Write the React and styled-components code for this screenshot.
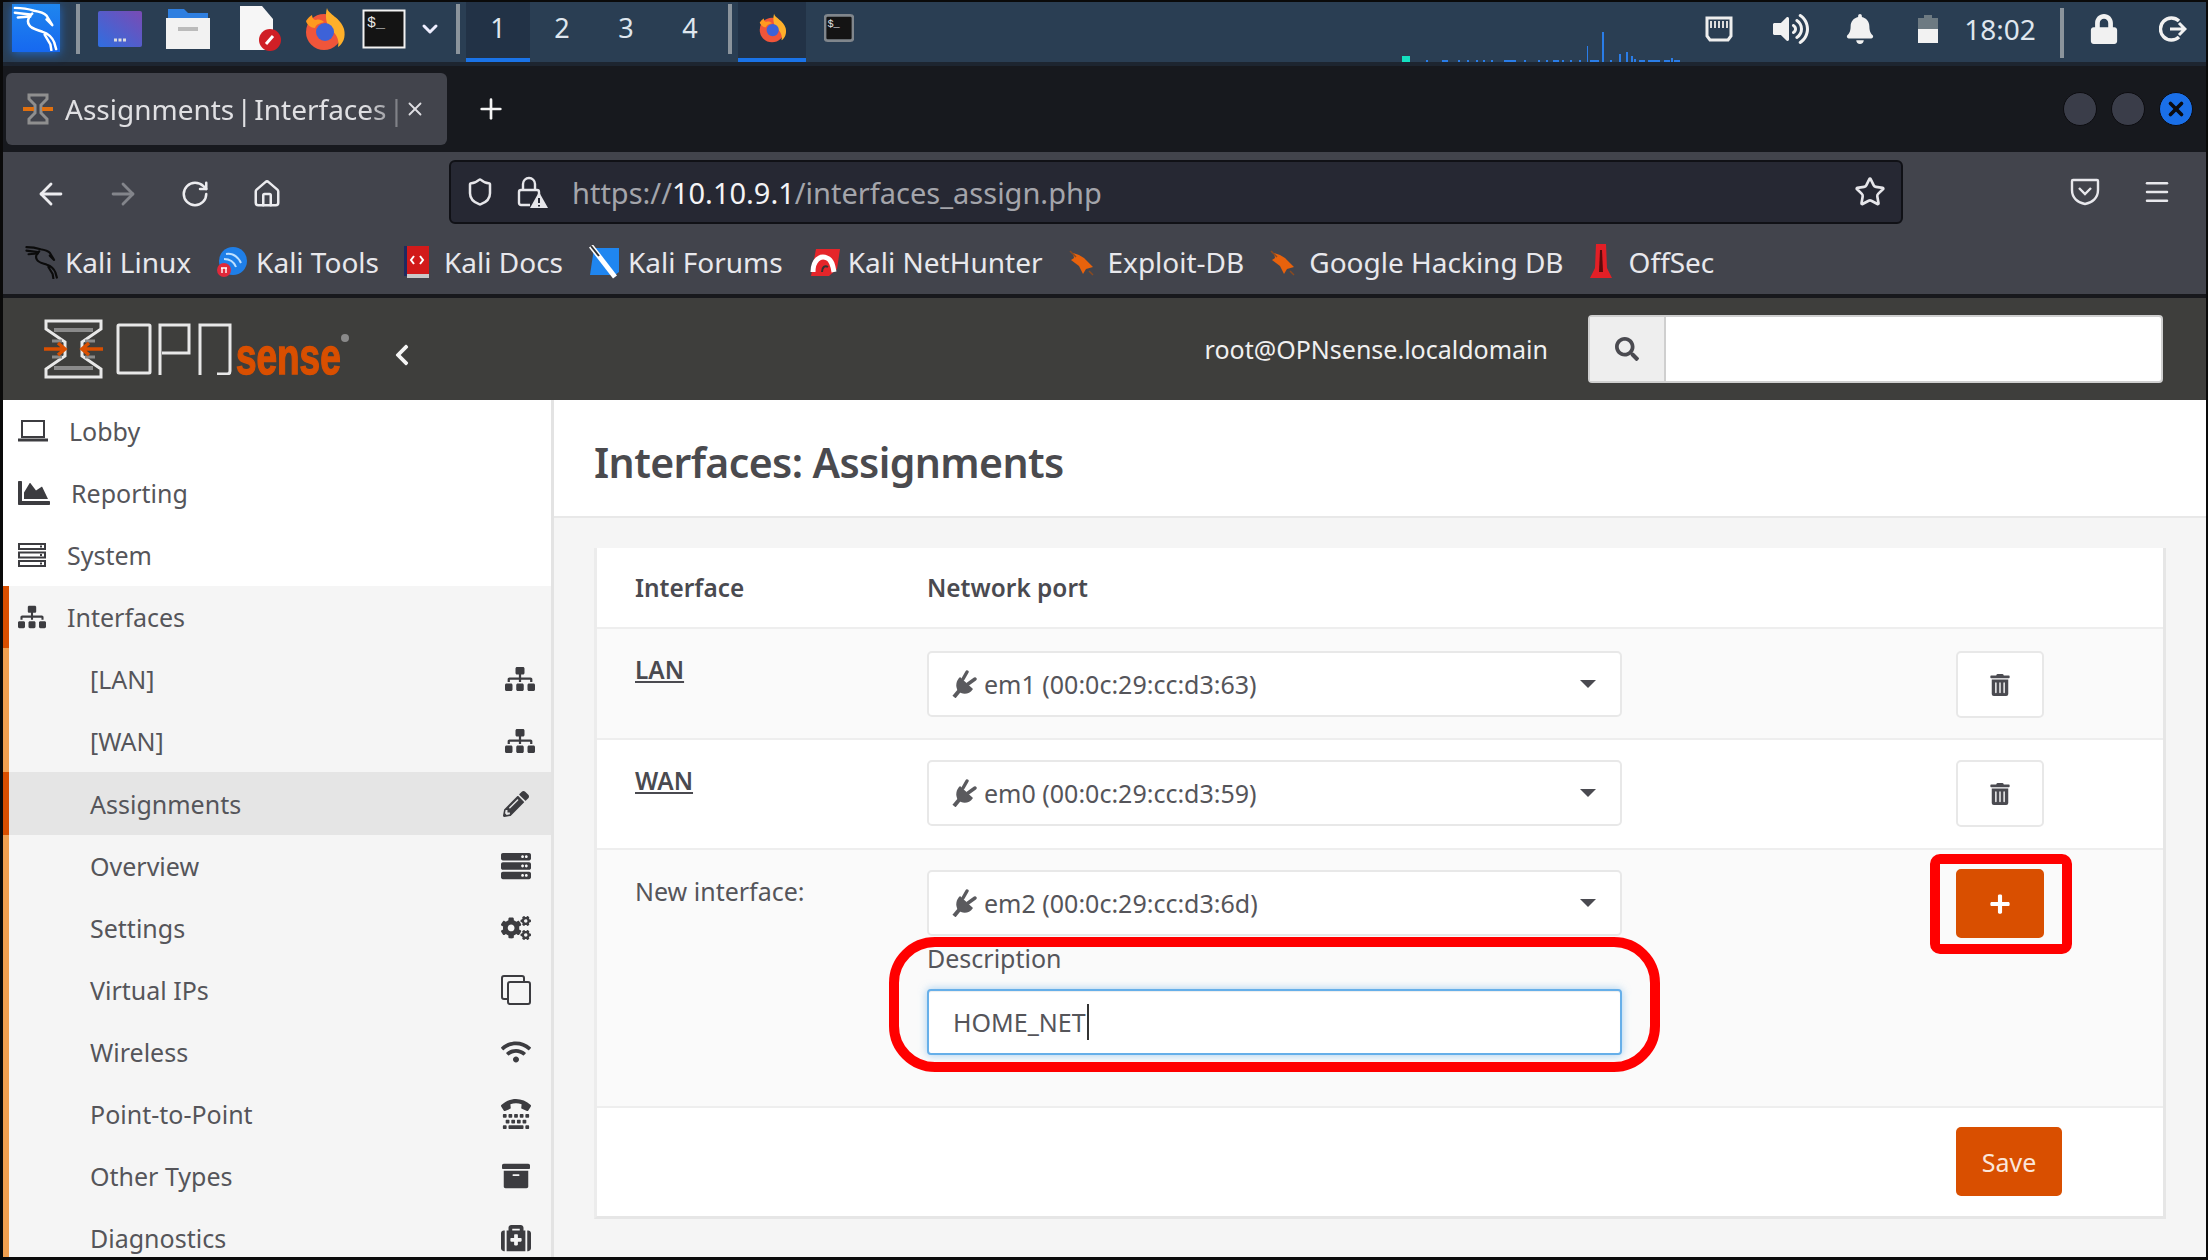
import React from 'react';
import styled, { createGlobalStyle } from 'styled-components';
import {
  FaChartArea, FaServer, FaSitemap, FaPencilAlt, FaCogs,
  FaWifi, FaTty, FaArchive, FaMedkit, FaTrashAlt, FaPlus, FaSearch, FaChevronLeft,
  FaLock, FaBell, FaVolumeUp,
} from 'react-icons/fa';
import { ArrowLeft, ArrowRight, RotateCw, Home, Shield, Star, Menu, ChevronDown, Plus, X } from 'lucide-react';

const UI = '"Noto Sans", "Open Sans", sans-serif';

const Global = createGlobalStyle`
  html, body { margin: 0; padding: 0; background: #000; }
  * { box-sizing: border-box; }
  body { font-family: ${UI}; }
`;

const Screen = styled.div`
  width: 2208px;
  height: 1260px;
  padding: 2px 2px 3px 3px;
  background: #0a0a0a;
  display: flex;
  flex-direction: column;
  overflow: hidden;
  position: relative;
`;

/* taskbar */
const Taskbar = styled.div`
  height: 64px;
  flex: none;
  display: flex;
  align-items: stretch;
  background: #2a3e53;
  border-bottom: 4px solid #1d2530;
`;
const KaliButton = styled.div`
  width: 48px;
  height: 48px;
  margin: 2px 0 0 9px;
  background: linear-gradient(#1f86ee, #1668f0);
  display: flex;
  align-items: center;
  justify-content: center;
  box-shadow: 0 2px 9px rgba(30, 120, 240, .7);
`;
const BarRule = styled.div`
  width: 4px;
  height: 50px;
  margin: 2px ${p => p.$right || 0}px 0 ${p => p.$left || 0}px;
  background: #8b949c;
`;
const LauncherSlot = styled.div`
  width: ${p => p.$w}px;
  flex: none;
  padding-bottom: 6px;
  display: flex;
  align-items: center;
  justify-content: center;
`;
const Workspace = styled.div`
  width: 64px;
  padding-bottom: 6px;
  display: flex;
  align-items: center;
  justify-content: center;
  color: #dfe6ee;
  font-size: 27px;
  background: ${p => (p.$active ? '#223246' : 'transparent')};
  border-bottom: 4px solid ${p => (p.$active ? '#1a73e8' : 'transparent')};
`;
const TaskItem = styled.div`
  width: ${p => p.$w}px;
  padding-bottom: 4px;
  display: flex;
  align-items: center;
  justify-content: center;
  background: ${p => (p.$active ? '#223246' : 'transparent')};
  border-bottom: 4px solid ${p => (p.$active ? '#1a73e8' : 'transparent')};
`;
const Spacer = styled.div`
  flex: 1;
`;
const Tray = styled.div`
  display: flex;
  align-items: center;
  color: #f1f1f1;
`;
const TrayCell = styled.div`
  width: ${p => p.$w}px;
  padding-bottom: 6px;
  display: flex;
  justify-content: center;
`;
const Clock = styled.div`
  font-size: 28px;
  color: #dfe6ee;
  width: 80px;
  padding-bottom: 6px;
  text-align: center;
`;
const NetGraph = styled.svg`
  align-self: flex-end;
  display: block;
`;

/* firefox chrome */
const TabStrip = styled.div`
  height: 86px;
  flex: none;
  background: #17191e;
  display: flex;
  align-items: center;
  padding: 0 0 0 3px;
`;
const BrowserTab = styled.div`
  width: 441px;
  height: 72px;
  background: #42444c;
  border-radius: 6px;
  display: flex;
  align-items: center;
  padding-left: 17px;
  font-size: 28px;
  white-space: nowrap;
`;
const TabTitle = styled.span`
  margin-left: 12px;
  width: 334px;
  color: #e0e0e3;
  word-spacing: -5px;
  -webkit-mask-image: linear-gradient(90deg, #000 90%, rgba(0,0,0,.35));
  mask-image: linear-gradient(90deg, #000 90%, rgba(0,0,0,.35));
`;
const CloseTab = styled(X)`
  margin-left: 5px;
  color: #dedee2;
`;
const NewTab = styled.div`
  margin-left: 28px;
  color: #f5f5f5;
  display: flex;
`;
const WinButtons = styled.div`
  margin-left: auto;
  margin-right: 13px;
  display: flex;
  gap: 14px;
`;
const WinButton = styled.div`
  width: 34px;
  height: 34px;
  border-radius: 50%;
  background: ${p => (p.$close ? '#1a6fe8' : '#3a3d49')};
  border: 1px solid #0c0c10;
  display: flex;
  align-items: center;
  justify-content: center;
  color: #0b0b10;
`;
const NavBar = styled.div`
  height: 78px;
  flex: none;
  background: #42444c;
  display: flex;
  align-items: center;
  color: #f0f0f2;
  padding: 5px 0 0 12px;
`;
const NavIcon = styled.div`
  width: 72px;
  display: flex;
  justify-content: center;
  color: ${p => (p.$dim ? '#83858b' : '#ececef')};
`;
const UrlBox = styled.div`
  width: 1454px;
  height: 64px;
  margin: -3px 0 0 146px;
  background: #262833;
  border: 2px solid #101116;
  border-radius: 6px;
  display: flex;
  align-items: center;
  padding: 0 15px 0 14px;
  gap: 21px;
  color: #e6e6ea;
`;
const UrlText = styled.div`
  flex: 1;
  margin-left: 3px;
  font-size: 29px;
  color: #a4a5ab;
  white-space: nowrap;
`;
const UrlHost = styled.span`
  color: #f4f4f6;
`;
const RightTools = styled.div`
  margin: -3px 0 0 167px;
  display: flex;
  align-items: center;
  gap: 42px;
  color: #e8e8ec;
`;
const BookmarkBar = styled.div`
  height: 68px;
  flex: none;
  background: #42444c;
  border-bottom: 4px solid #17181c;
  display: flex;
  align-items: center;
  padding: 0 0 0 22px;
  gap: 25px;
`;
const Bookmark = styled.div`
  display: flex;
  align-items: center;
  color: #e8e8ec;
  font-size: 28px;
  white-space: nowrap;
`;
const BookmarkIcon = styled.span`
  width: 40px;
  flex: none;
  display: flex;
  align-items: center;
`;

/* opnsense */
const Navbar = styled.div`
  height: 102px;
  flex: none;
  background: #3e3e3c;
  display: flex;
  align-items: center;
  color: #fff;
`;
const Brand = styled.div`
  display: flex;
  align-items: center;
  margin-left: 41px;
`;
const WordGap = styled.span`
  width: 13px;
`;
const SenseWord = styled.span`
  font-family: "Liberation Sans", sans-serif;
  font-weight: 700;
  font-size: 52px;
  line-height: 1;
  color: #d94f00;
  -webkit-text-stroke: 1.5px #d94f00;
  transform: scaleX(.71);
  transform-origin: left bottom;
  display: inline-block;
  width: 105px;
  margin: 14px 0 0 4px;
`;
const Registered = styled.svg`
  margin: -22px 0 0 0;
`;
const BackChevron = styled.div`
  display: flex;
  color: #f5f5f5;
  margin: 12px 0 0 41px;
`;
const UserName = styled.div`
  margin-left: auto;
  font-size: 25px;
  color: #f0f0f0;
`;
const SearchGroup = styled.div`
  width: 575px;
  height: 68px;
  margin: 0 43px 0 40px;
  display: flex;
  background: #fff;
  border: 2px solid #cfcfcf;
  border-radius: 4px;
`;
const SearchAddon = styled.div`
  width: 76px;
  background: #eeeeee;
  border-right: 2px solid #cfcfcf;
  color: #4a4a50;
  display: flex;
  align-items: center;
  justify-content: center;
`;
const Body = styled.div`
  flex: 1;
  display: flex;
  min-height: 0;
`;
const Sidebar = styled.div`
  width: 551px;
  flex: none;
  background: #fff;
  border-right: 3px solid #e3e3e3;
  overflow: hidden;
`;
const MenuRow = styled.div`
  height: ${p => p.$h || 62}px;
  display: flex;
  align-items: center;
  font-size: 25px;
  color: #55555a;
  background: ${p => p.$bg || 'transparent'};
  border-left: 6px solid ${p => p.$accent || 'transparent'};
  padding-left: ${p => (p.$sub ? 81 : 9)}px;
  padding-right: ${p => (p.$sub ? 20 : 0)}px;
`;
const MenuIcon = styled.span`
  width: ${p => p.$w}px;
  flex: none;
  display: flex;
  color: #3c3c40;
`;
const SubIcon = styled.span`
  margin-left: auto;
  width: 30px;
  display: flex;
  justify-content: center;
  color: #3c3c40;
`;
const SubSitemap = styled(FaSitemap)`
  margin-left: 8px;
  flex: none;
`;
const Main = styled.div`
  flex: 1;
  min-width: 0;
  background: #f5f5f5;
  display: flex;
  flex-direction: column;
`;
const TitleBand = styled.div`
  height: 118px;
  flex: none;
  background: #fff;
  border-bottom: 2px solid #e8e8e8;
  display: flex;
  align-items: center;
  padding: 8px 0 0 40px;
`;
const PageTitle = styled.h1`
  margin: 0;
  font-size: 41px;
  font-weight: 600;
  color: #4a4a4e;
  letter-spacing: -.6px;
`;
const Card = styled.div`
  margin: 30px 40px 0 40px;
  background: #fff;
  border-left: 3px solid #ececec;
  border-right: 3px solid #e6e6e6;
  border-bottom: 3px solid #e6e6e6;
`;
const TableRow = styled.div`
  display: grid;
  grid-template-columns: 330px 695px 334px 1fr;
  height: ${p => p.$h}px;
  background: ${p => (p.$odd ? '#fafafa' : '#fff')};
  border-bottom: ${p => (p.$last ? 0 : 2)}px solid #eeeeee;
`;
const Cell = styled.div`
  padding-left: ${p => (p.$first ? 38 : 0)}px;
  padding-top: ${p => p.$top || 0}px;
  font-size: 25px;
  color: #55555a;
`;
const HeadCell = styled(Cell)`
  font-weight: 600;
  font-size: 24.4px;
  display: flex;
  align-items: center;
  color: #4a4a50;
`;
const IfLink = styled.a`
  font-weight: 600;
  font-size: 24.4px;
  text-decoration: underline;
  color: #4a4a50;
`;
const Select = styled.div`
  width: 695px;
  height: 66px;
  background: #fff;
  border: 2px solid #e8e8e8;
  border-radius: 5px;
  display: flex;
  align-items: center;
  padding: 0 24px 0 23px;
  font-size: 25px;
  color: #55555a;
  gap: 7px;
`;
const Caret = styled.span`
  margin-left: auto;
  width: 0;
  height: 0;
  border-left: 8px solid transparent;
  border-right: 8px solid transparent;
  border-top: 8px solid #4a4a50;
`;
const FieldLabel = styled.div`
  height: 53px;
  padding-bottom: 10px;
  display: flex;
  align-items: center;
`;
const TextBox = styled.div`
  width: 695px;
  height: 66px;
  background: #fff;
  border: 2px solid #66afe9;
  border-radius: 4px;
  box-shadow: inset 0 1px 1px rgba(0,0,0,.075), 0 0 8px rgba(102,175,233,.6);
  display: flex;
  align-items: center;
  padding-left: 24px;
  color: #55555a;
  font-size: 25px;
`;
const TextCaret = styled.span`
  width: 2px;
  height: 36px;
  background: #333;
  margin-left: 1px;
`;
const IconButton = styled.div`
  width: 88px;
  height: ${p => (p.$primary ? 69 : 67)}px;
  background: ${p => (p.$primary ? '#d94f00' : '#fff')};
  border: 2px solid ${p => (p.$primary ? '#d94f00' : '#e8e8e8')};
  border-radius: 5px;
  color: ${p => (p.$primary ? '#fff' : '#4a4a50')};
  display: flex;
  align-items: center;
  justify-content: center;
`;
const SaveButton = styled.div`
  width: 106px;
  height: 69px;
  background: #d94f00;
  border-radius: 5px;
  color: #fbe6da;
  font-size: 25px;
  display: flex;
  align-items: center;
  justify-content: center;
`;
const Annotation = styled.div`
  position: absolute;
  border: ${p => p.$bw}px solid #ff0000;
  border-radius: ${p => p.$r}px;
  left: ${p => p.$x}px;
  top: ${p => p.$y}px;
  width: ${p => p.$w}px;
  height: ${p => p.$h}px;
  pointer-events: none;
`;

const KaliDragon = ({ size = 48, color = '#fff', sw = 2.6 }) => (
  <svg width={size} height={size} viewBox="0 0 48 48" fill="none" stroke={color} strokeWidth={sw} strokeLinecap="round" strokeLinejoin="round">
    <path d="M2 3c8 0 14 1 20 3 6 1 11 3 13 5l6 10-6-6" />
    <path d="M20 9c-4 4-6 8-3 12 2 4 9 5 14 7 6 2 10 6 12 11l2 7M33 31l6 10 1 6" />
    <path d="M2 8l16 2M5 13l13-1" />
  </svg>
);

const TabLogo = () => (
  <svg width="30" height="32" viewBox="0 0 30 32" fill="none">
    <path d="M6 2h18v4l-6 6v8l6 6v4H6v-4l6-6v-8L6 6z" stroke="#8f8f8f" strokeWidth="3" />
    <path d="M0 16h11M30 16H19" stroke="#e0700f" strokeWidth="4" />
  </svg>
);

const OpnLogoMark = () => (
  <svg width="59" height="60" viewBox="0 0 59 60" fill="none">
    <path d="M2 2h55v8L38 23v14l19 13v8H2v-8l19-13V23L2 10z" stroke="#e8e8e8" strokeWidth="3" />
    <path d="M10 9h39v4H10zM10 47h39v4H10z" fill="#8a8a8a" />
    <path d="M8 22h10M51 22H41M8 38h10M51 38H41" stroke="#8a8a8a" strokeWidth="3" />
    <path d="M0 30h21M59 30H38M14 24l7 6-7 6M45 24l-7 6 7 6" stroke="#d94f00" strokeWidth="3.5" />
  </svg>
);

const OpnWord = () => (
  <svg width="116" height="52" viewBox="0 0 116 52" fill="none" stroke="#e8e8e8" strokeWidth="3">
    <rect x="2" y="2" width="32" height="48" rx="1" />
    <path d="M44 52V2h29v28H46" />
    <path d="M84 52V2h30v46c0 2-1 3-3 3H101" />
  </svg>
);

const Firefox = ({ size = 44 }) => (
  <svg width={size} height={size} viewBox="0 0 44 44">
    <circle cx="22" cy="25" r="18" fill="#f0553a" />
    <path d="M25 1c1 6 14 10 17 21 2 8-1 15-6 18 2-8-3-15-9-19-3-6-4-13-2-20z" fill="#ffb02a" />
    <path d="M4 14c2-3 4-5 6-6 0 3 2 5 4 5 3-1 6 0 8 2-3 1-8 2-9 6-4 0-8-3-9-7z" fill="#ff9a1f" />
    <circle cx="23" cy="25" r="9" fill="#3d62d8" />
  </svg>
);

const Terminal = ({ w, h, border = '#f2f2f2', sw = 2, r = 0 }) => (
  <svg width={w} height={h} viewBox="0 0 44 40">
    <rect x="1.5" y="1.5" width="41" height="37" rx={r} fill="#141414" stroke={border} strokeWidth={sw} />
    <text x="5" y="18" fontFamily="Liberation Mono, monospace" fontSize="15" fill="#e8e8e8">$_</text>
  </svg>
);

const WarnLock = () => (
  <svg width="32" height="34" viewBox="0 0 32 34" fill="none">
    <path d="M7 16V9a6 6 0 0 1 12 0v7" stroke="#e6e6ea" strokeWidth="2.4" />
    <path d="M14 30H5a2 2 0 0 1-2-2V17a2 2 0 0 1 2-2h16a2 2 0 0 1 2 2v3" stroke="#e6e6ea" strokeWidth="2.4" />
    <path d="M23 17l9 16H14z" fill="#e6e6ea" />
    <path d="M23 23v5M23 30v1.5" stroke="#262833" strokeWidth="2" />
  </svg>
);

const PocketIcon = () => (
  <svg width="30" height="30" viewBox="0 0 30 30" fill="none" stroke="#e8e8ec" strokeWidth="2.4">
    <path d="M3 3h24a1 1 0 0 1 1 1v9c0 8-6 13-13 14C8 26 2 21 2 13V4a1 1 0 0 1 1-1z" />
    <path d="M9 11l6 6 6-6" />
  </svg>
);

const LobbyIcon = () => (
  <svg width="30" height="24" viewBox="0 0 30 24" fill="none" stroke="#3c3c40" strokeWidth="2">
    <rect x="4" y="2" width="22" height="16" />
    <path d="M0 21h30" strokeWidth="3" />
  </svg>
);

const SystemIcon = () => (
  <svg width="28" height="24" viewBox="0 0 28 24" fill="none" stroke="#3c3c40" strokeWidth="2">
    <rect x="1" y="1" width="26" height="5" />
    <rect x="1" y="9.5" width="26" height="5" />
    <rect x="1" y="18" width="26" height="5" />
    <path d="M22 3.5h2M22 12h2M22 20.5h2" />
  </svg>
);

const CloneIcon = () => (
  <svg width="30" height="30" viewBox="0 0 30 30" fill="none" stroke="#3c3c40" strokeWidth="2">
    <path d="M6 24H3a2 2 0 0 1-2-2V3a2 2 0 0 1 2-2h18a2 2 0 0 1 2 2v3" />
    <rect x="7" y="7" width="22" height="22" rx="2" />
  </svg>
);

const LogoutIcon = () => (
  <svg width="28" height="30" viewBox="0 0 28 30" fill="none" stroke="#f1f1f1" strokeWidth="3.4">
    <path d="M20 7a11 11 0 1 0 0 16" />
    <path d="M11 15h15M20 9l6 6-6 6" strokeWidth="3" />
  </svg>
);

// angled plug with a short cord, as the port dropdowns show it
const PlugIcon = () => (
  <svg width="25" height="28" viewBox="0 0 25 28" fill="none">
    <path d="M8 7l13 12c-4 6-11 6-15 2-3-5-2-10 2-14z" fill="#5a5a5e" />
    <path d="M11 9l4-7M16 14l7-5" stroke="#5a5a5e" strokeWidth="3.4" strokeLinecap="round" />
    <path d="M7 21l-5 6" stroke="#5a5a5e" strokeWidth="4" />
  </svg>
);

const MiniIcon = ({ kind }) => {
  if (kind === 'kali') return <KaliDragon size={34} color="#0b0b0b" sw={3} />;
  if (kind === 'tools') return (
    <svg width="32" height="32" viewBox="0 0 32 32">
      <circle cx="17" cy="15" r="14" fill="#1f7fe8" />
      <path d="M10 8c7-1 12 3 15 9M8 13c6 0 10 3 12 8" stroke="#bfe0ff" strokeWidth="2" fill="none" />
      <circle cx="8" cy="24" r="7" fill="#e0283a" />
      <path d="M5 22h6M6 22v5M10 22v5" stroke="#fff" strokeWidth="1.4" />
    </svg>
  );
  if (kind === 'docs') return (
    <svg width="26" height="34" viewBox="0 0 26 34">
      <rect x="0" y="1" width="3" height="30" fill="#1f2a60" />
      <rect x="3" y="1" width="22" height="28" fill="#d21a1a" />
      <rect x="3" y="29" width="22" height="4" fill="#c9c9c9" />
      <path d="M10 11l-3 4 3 4M16 11l3 4-3 4" stroke="#fff" strokeWidth="2" fill="none" />
    </svg>
  );
  if (kind === 'forums') return (
    <svg width="32" height="34" viewBox="0 0 32 34">
      <path d="M6 3h25v24l-4 3H2z" fill="#1f86f0" />
      <path d="M3 1l24 31" stroke="#fff" strokeWidth="5" />
      <path d="M3 1l8 10" stroke="#333" strokeWidth="2" />
    </svg>
  );
  if (kind === 'hunter') return (
    <svg width="32" height="32" viewBox="0 0 32 32">
      <path d="M8 3h24l-3 20-8 7H3z" fill="#e5252a" />
      <path d="M5 26c0-12 7-17 14-14 5 2 6 8 7 14" stroke="#fff" strokeWidth="5" fill="none" />
      <path d="M14 26c0-5 3-7 6-5" stroke="#333" strokeWidth="2" fill="none" />
    </svg>
  );
  if (kind === 'bug') return (
    <svg width="28" height="30" viewBox="0 0 28 30">
      <path d="M5 6l6 2 5 3 9 9-7 2-3 5-4-8-8-6 3-2z" fill="#e8620c" />
      <path d="M2 4l6 6M21 24l4 4" stroke="#8a4a20" strokeWidth="1.5" />
    </svg>
  );
  return (
    <svg width="24" height="36" viewBox="0 0 24 36">
      <path d="M7 0h10l1 24 5 10H1l5-10z" fill="#e21f26" />
      <path d="M11 6h2l1 22h-4z" fill="#5a0b0b" />
    </svg>
  );
};

const bookmarks = [
  ['kali', 'Kali Linux'], ['tools', 'Kali Tools'], ['docs', 'Kali Docs'], ['forums', 'Kali Forums'],
  ['hunter', 'Kali NetHunter'], ['bug', 'Exploit-DB'], ['bug', 'Google Hacking DB'], ['off', 'OffSec'],
];

const subMenu = [
  ['[LAN]', <SubSitemap size={30} />],
  ['[WAN]', <SubSitemap size={30} />],
  ['Assignments', <FaPencilAlt size={26} />],
  ['Overview', <FaServer size={30} />],
  ['Settings', <FaCogs size={30} />],
  ['Virtual IPs', <CloneIcon />],
  ['Wireless', <FaWifi size={30} />],
  ['Point-to-Point', <FaTty size={30} />],
  ['Other Types', <FaArchive size={28} />],
  ['Diagnostics', <FaMedkit size={30} />],
];

// x, width, height of the spikes in the tray's network graph
const bars = [[422, 8, 6, '#14e0c0'], [446, 2, 2], [462, 6, 2], [478, 2, 2], [487, 2, 2], [496, 2, 2], [503, 2, 2], [511, 2, 2], [524, 12, 2], [544, 2, 2], [558, 2, 2], [566, 2, 2], [573, 6, 2], [582, 2, 2], [590, 2, 2], [599, 2, 2], [607, 1, 16], [610, 9, 2], [622, 2, 30], [630, 2, 2], [639, 2, 8], [646, 2, 10], [651, 2, 6], [654, 2, 3], [659, 6, 2], [668, 12, 2], [684, 6, 2], [691, 2, 4], [694, 6, 2]];

const PortSelect = ({ children }) => (
  <Select>
    <PlugIcon />
    <span>{children}</span>
    <Caret />
  </Select>
);

export default function App() {
  return (
    <>
      <Global />
      <Screen>
        <Taskbar>
          <KaliButton><KaliDragon size={46} /></KaliButton>
          <BarRule $left={16} $right={6} />
          <LauncherSlot $w={68}>
            <svg width="44" height="36" viewBox="0 0 44 36">
              <defs><linearGradient id="launch" x1="0" x2="1" y1="1" y2="0"><stop offset="0" stopColor="#2f6ee0" /><stop offset="1" stopColor="#7a4bb4" /></linearGradient></defs>
              <rect width="44" height="36" rx="2" fill="url(#launch)" />
              <path d="M16 29h12" stroke="#ddd" strokeWidth="3" strokeDasharray="3 1.5" />
            </svg>
          </LauncherSlot>
          <LauncherSlot $w={68}>
            <svg width="44" height="40" viewBox="0 0 44 40"><path d="M2 0h16l4 4h20v8H2z" fill="#2f7fe0" /><rect y="9" width="44" height="31" fill="#f2f2f2" /><rect x="12" y="18" width="20" height="4" fill="#bbb" /></svg>
          </LauncherSlot>
          <LauncherSlot $w={76}>
            <svg width="42" height="46" viewBox="0 0 42 46"><path d="M1 0h22l11 13v31H1z" fill="#f6f6f6" /><circle cx="31" cy="34" r="11" fill="#d01f26" /><path d="M27 38l7-8" stroke="#fff" strokeWidth="3" /></svg>
          </LauncherSlot>
          <LauncherSlot $w={52}><Firefox size={44} /></LauncherSlot>
          <LauncherSlot $w={68}><Terminal w={44} h={40} /></LauncherSlot>
          <LauncherSlot $w={24}><ChevronDown size={24} color="#eef" strokeWidth={3} /></LauncherSlot>
          <BarRule $left={14} $right={6} />
          <Workspace $active>1</Workspace>
          <Workspace>2</Workspace>
          <Workspace>3</Workspace>
          <Workspace>4</Workspace>
          <BarRule $left={6} $right={6} />
          <TaskItem $w={68} $active><Firefox size={30} /></TaskItem>
          <TaskItem $w={66}><Terminal w={30} h={32} border="#80868c" sw={4} r={4} /></TaskItem>
          <Spacer />
          <NetGraph width="700" height="34" viewBox="0 0 700 34">
            {bars.map(([x, w, h, c], i) => (
              <rect key={i} x={x} y={34 - h} width={w} height={h} fill={c || '#2a7de8'} />
            ))}
          </NetGraph>
          <Tray>
            <TrayCell $w={78}>
              <svg width="28" height="26" viewBox="0 0 28 26"><path d="M2 2h24v18l-3 4H5l-3-4z" fill="none" stroke="#eee" strokeWidth="3" /><path d="M6 5v7M10 5v7M14 5v7M18 5v7M22 5v7" stroke="#ddd" strokeWidth="2" /></svg>
            </TrayCell>
            <TrayCell $w={66}><FaVolumeUp size={36} /></TrayCell>
            <TrayCell $w={72}><FaBell size={30} /></TrayCell>
            <TrayCell $w={64}>
              <svg width="20" height="28" viewBox="0 0 20 28"><rect y="3" width="20" height="12" fill="#6d7a82" /><rect x="6" width="8" height="3" fill="#6d7a82" /><rect y="14" width="20" height="14" fill="#f2f2f2" /></svg>
            </TrayCell>
            <Clock>18:02</Clock>
            <BarRule $left={20} $right={4} />
            <TrayCell $w={72}><FaLock size={30} /></TrayCell>
            <TrayCell $w={66}><LogoutIcon /></TrayCell>
          </Tray>
        </Taskbar>

        <TabStrip>
          <BrowserTab>
            <TabLogo />
            <TabTitle>Assignments | Interfaces |</TabTitle>
            <CloseTab size={22} />
          </BrowserTab>
          <NewTab><Plus size={32} strokeWidth={2} /></NewTab>
          <WinButtons>
            <WinButton />
            <WinButton />
            <WinButton $close><X size={22} strokeWidth={4} /></WinButton>
          </WinButtons>
        </TabStrip>

        <NavBar>
          <NavIcon><ArrowLeft size={34} strokeWidth={2} /></NavIcon>
          <NavIcon $dim><ArrowRight size={34} strokeWidth={2} /></NavIcon>
          <NavIcon><RotateCw size={30} strokeWidth={2} /></NavIcon>
          <NavIcon><Home size={30} strokeWidth={2} /></NavIcon>
          <UrlBox>
            <Shield size={30} strokeWidth={2} />
            <WarnLock />
            <UrlText>https://<UrlHost>10.10.9.1</UrlHost>/interfaces_assign.php</UrlText>
            <Star size={32} strokeWidth={2} />
          </UrlBox>
          <RightTools>
            <PocketIcon />
            <Menu size={30} strokeWidth={2} />
          </RightTools>
        </NavBar>
        <BookmarkBar>
          {bookmarks.map(([kind, name]) => (
            <Bookmark key={name}><BookmarkIcon><MiniIcon kind={kind} /></BookmarkIcon>{name}</Bookmark>
          ))}
        </BookmarkBar>

        <Navbar>
          <Brand>
            <OpnLogoMark />
            <WordGap />
            <OpnWord />
            <SenseWord>sense</SenseWord>
            <Registered width="8" height="8" viewBox="0 0 8 8"><circle cx="4" cy="4" r="4" fill="#8a8a8a" /></Registered>
            <BackChevron><FaChevronLeft size={24} /></BackChevron>
          </Brand>
          <UserName>root@OPNsense.localdomain</UserName>
          <SearchGroup>
            <SearchAddon><FaSearch size={24} /></SearchAddon>
          </SearchGroup>
        </Navbar>

        <Body>
          <Sidebar>
            <MenuRow>
              <MenuIcon $w={51}><LobbyIcon /></MenuIcon>Lobby
            </MenuRow>
            <MenuRow>
              <MenuIcon $w={53}><FaChartArea size={32} /></MenuIcon>Reporting
            </MenuRow>
            <MenuRow>
              <MenuIcon $w={49}><SystemIcon /></MenuIcon>System
            </MenuRow>
            <MenuRow $bg="#f5f5f5" $accent="#d94f00">
              <MenuIcon $w={49}><FaSitemap size={28} /></MenuIcon>Interfaces
            </MenuRow>
            {subMenu.map(([label, icon]) => {
              const active = label === 'Assignments';
              return (
                <MenuRow key={label} $sub $h={active ? 63 : 62} $bg={active ? '#e5e5e5' : '#f5f5f5'} $accent={active ? '#d94f00' : '#f0a050'}>
                  {label}
                  <SubIcon>{icon}</SubIcon>
                </MenuRow>
              );
            })}
          </Sidebar>
          <Main>
            <TitleBand><PageTitle>Interfaces: Assignments</PageTitle></TitleBand>
            <Card>
              <TableRow $h={81}>
                <HeadCell $first>Interface</HeadCell>
                <HeadCell>Network port</HeadCell>
              </TableRow>
              <TableRow $h={111} $odd>
                <Cell $first $top={23}><IfLink>LAN</IfLink></Cell>
                <Cell $top={22}><PortSelect>em1 (00:0c:29:cc:d3:63)</PortSelect></Cell>
                <Cell />
                <Cell $top={22}><IconButton><FaTrashAlt size={22} /></IconButton></Cell>
              </TableRow>
              <TableRow $h={110}>
                <Cell $first $top={23}><IfLink>WAN</IfLink></Cell>
                <Cell $top={20}><PortSelect>em0 (00:0c:29:cc:d3:59)</PortSelect></Cell>
                <Cell />
                <Cell $top={20}><IconButton><FaTrashAlt size={22} /></IconButton></Cell>
              </TableRow>
              <TableRow $h={258} $odd>
                <Cell $first $top={24}>New interface:</Cell>
                <Cell $top={20}>
                  <PortSelect>em2 (00:0c:29:cc:d3:6d)</PortSelect>
                  <FieldLabel>Description</FieldLabel>
                  <TextBox>HOME_NET<TextCaret /></TextBox>
                </Cell>
                <Cell />
                <Cell $top={19}><IconButton $primary><FaPlus size={22} /></IconButton></Cell>
              </TableRow>
              <TableRow $h={108} $last>
                <Cell />
                <Cell />
                <Cell />
                <Cell $top={19}><SaveButton>Save</SaveButton></Cell>
              </TableRow>
            </Card>
          </Main>
        </Body>
        <Annotation $x={889} $y={937} $w={771} $h={135} $bw={10} $r={46} />
        <Annotation $x={1930} $y={854} $w={142} $h={100} $bw={10} $r={10} />
      </Screen>
    </>
  );
}
